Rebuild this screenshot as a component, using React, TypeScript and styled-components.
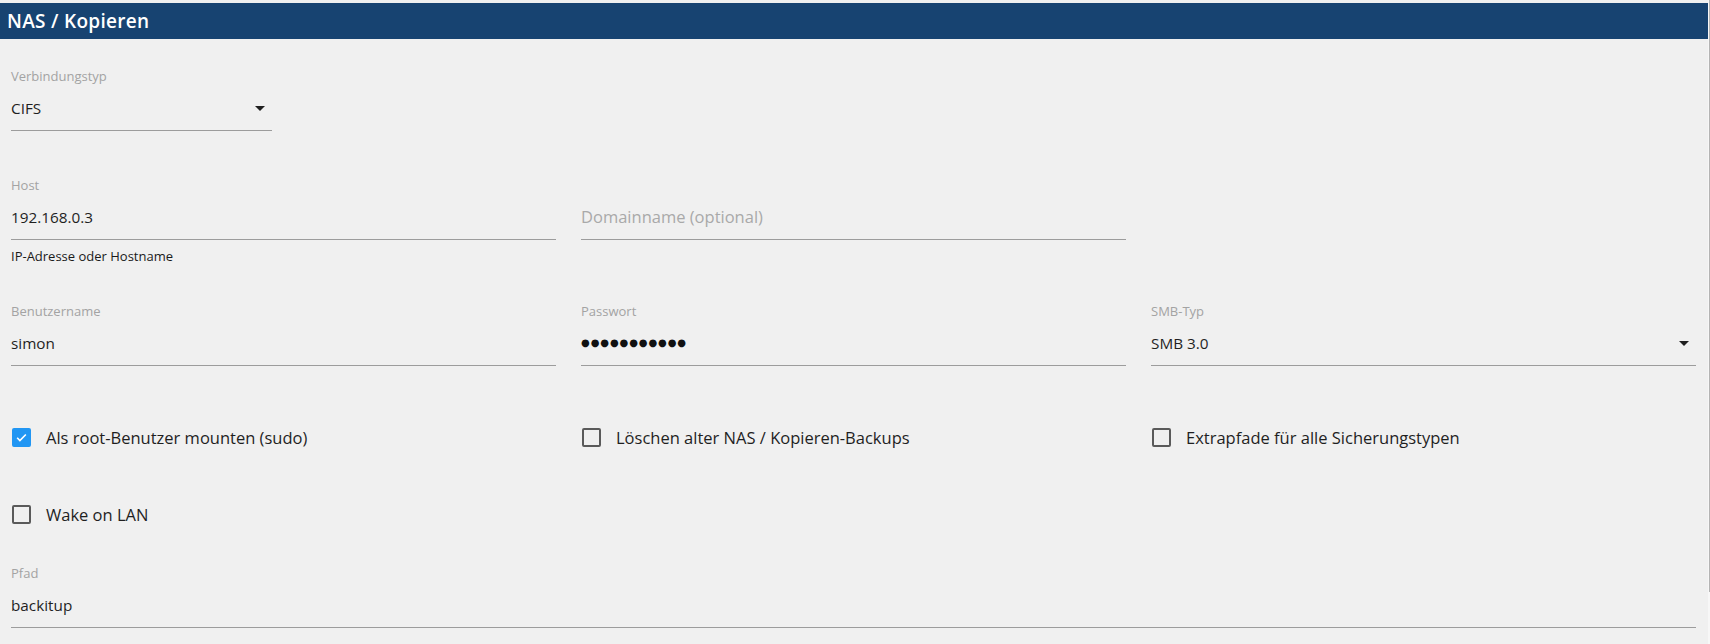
import * as React from "react";
import styled, { createGlobalStyle } from "styled-components";

const GlobalStyle = createGlobalStyle`
  html, body {
    margin: 0;
    padding: 0;
    background: #f0f0f0;
  }
  body {
    font-family: "Open Sans", "Noto Sans", sans-serif;
    color: #1f1f1f;
    overflow: hidden;
  }
`;

const Page = styled.div`
  display: flex;
  height: 644px;
`;

const Main = styled.div`
  flex: 1;
  padding-top: 3px;
`;

const Scrollbar = styled.div`
  width: 2px;
  display: flex;
  flex-direction: column;
  background: #f7f7f7;
  & > div {
    height: 592px;
    margin-left: 1px;
    background: #b4b4b4;
  }
`;

const Header = styled.div`
  height: 36px;
  background: #174371;
  color: #ffffff;
  display: flex;
  align-items: center;
  padding-left: 7px;
  font-size: 19px;
  font-weight: 600;
  letter-spacing: 0.3px;
`;

const Content = styled.div`
  padding: 0 12px 0 11px;
`;

const Row = styled.div<{ $top: number }>`
  display: grid;
  grid-template-columns: repeat(3, 1fr);
  column-gap: 25px;
  margin-top: ${(p) => p.$top}px;
`;

const Field = styled.div<{ $width?: number; $span?: number }>`
  display: flex;
  flex-direction: column;
  width: ${(p) => (p.$width ? `${p.$width}px` : "auto")};
  grid-column: span ${(p) => p.$span ?? 1};
`;

const Label = styled.div`
  font-size: 13px;
  line-height: 16px;
  height: 16px;
  color: #a3a3a3;
  margin-bottom: 1px;
`;

const InputRow = styled.div`
  height: 45px;
  display: flex;
  align-items: center;
  justify-content: space-between;
  border-bottom: 1px solid #9c9c9c;
  font-size: 15.3px;
  color: #1f1f1f;
`;

const Value = styled.span<{ $muted?: boolean }>`
  color: ${(p) => (p.$muted ? "#a9a9a9" : "#1f1f1f")};
  font-size: ${(p) => (p.$muted ? "16.5px" : "inherit")};
`;

const Dots = styled.span`
  font-family: "DejaVu Sans", sans-serif;
  font-size: 10px;
  letter-spacing: 0.9px;
  color: #111;
`;

const Helper = styled.div`
  margin-top: 8px;
  font-size: 13px;
  line-height: 16px;
  color: #1a1a1a;
`;

const Arrow = styled.svg`
  width: 24px;
  height: 24px;
  flex: none;
`;

const CheckLine = styled.label`
  display: flex;
  align-items: center;
  height: 42px;
  font-size: 16.5px;
  color: #1f1f1f;
`;

const Box = styled.span<{ $checked?: boolean }>`
  box-sizing: border-box;
  width: 19px;
  height: 19px;
  margin-left: 1px;
  margin-right: 15px;
  border-radius: 2px;
  border: 2px solid ${(p) => (p.$checked ? "#2196f3" : "#5a5a5a")};
  background: ${(p) => (p.$checked ? "#2196f3" : "transparent")};
  display: flex;
  align-items: center;
  justify-content: center;
`;

const DropArrow = () => (
  <Arrow viewBox="0 0 24 24">
    <path d="M7 10l5 5 5-5z" fill="#1f1f1f" />
  </Arrow>
);

const Check: React.FC<{ checked?: boolean; label: string }> = ({ checked, label }) => (
  <CheckLine>
    <Box $checked={checked}>
      {checked && (
        <svg width="13" height="13" viewBox="0 0 24 24">
          <path d="M4 12.5l5 5L20 6.5" fill="none" stroke="#fff" strokeWidth="3" />
        </svg>
      )}
    </Box>
    {label}
  </CheckLine>
);

export default function App() {
  return (
    <>
      <GlobalStyle />
      <Page>
        <Main>
          <Header>NAS / Kopieren</Header>
          <Content>
            <Row $top={29}>
              <Field $width={261}>
                <Label>Verbindungstyp</Label>
                <InputRow>
                  <Value>CIFS</Value>
                  <DropArrow />
                </InputRow>
              </Field>
            </Row>

            <Row $top={46}>
              <Field>
                <Label>Host</Label>
                <InputRow>
                  <Value>192.168.0.3</Value>
                </InputRow>
                <Helper>IP-Adresse oder Hostname</Helper>
              </Field>
              <Field>
                <Label />
                <InputRow>
                  <Value $muted>Domainname (optional)</Value>
                </InputRow>
              </Field>
            </Row>

            <Row $top={39}>
              <Field>
                <Label>Benutzername</Label>
                <InputRow>
                  <Value>simon</Value>
                </InputRow>
              </Field>
              <Field>
                <Label>Passwort</Label>
                <InputRow>
                  <Dots>●●●●●●●●●●●</Dots>
                </InputRow>
              </Field>
              <Field>
                <Label>SMB-Typ</Label>
                <InputRow>
                  <Value>SMB 3.0</Value>
                  <DropArrow />
                </InputRow>
              </Field>
            </Row>

            <Row $top={50}>
              <Check checked label="Als root-Benutzer mounten (sudo)" />
              <Check label="Löschen alter NAS / Kopieren-Backups" />
              <Check label="Extrapfade für alle Sicherungstypen" />
            </Row>

            <Row $top={35}>
              <Check label="Wake on LAN" />
            </Row>

            <Row $top={30}>
              <Field $span={3}>
                <Label>Pfad</Label>
                <InputRow>
                  <Value>backitup</Value>
                </InputRow>
              </Field>
            </Row>
          </Content>
        </Main>
        <Scrollbar>
          <div />
        </Scrollbar>
      </Page>
    </>
  );
}
